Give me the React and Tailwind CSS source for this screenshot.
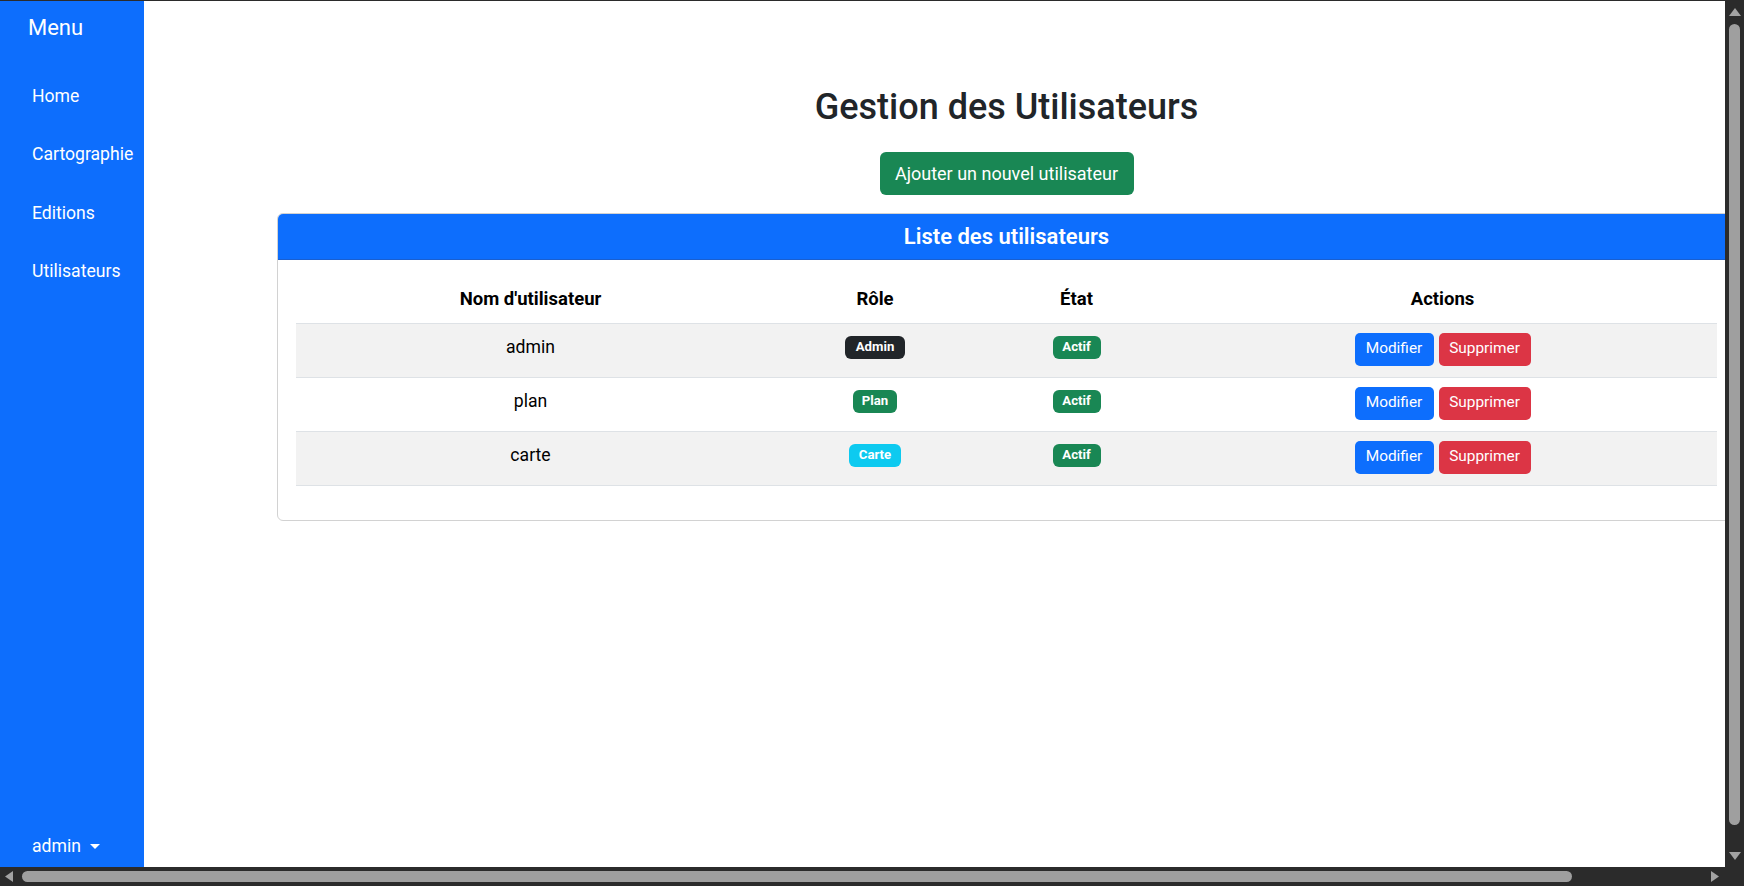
import React from "react";

const users = [
  { name: "admin", role: "Admin", roleCls: "bg-[#212529] w-[60px]" },
  { name: "plan", role: "Plan", roleCls: "bg-[#198754] w-[44px]" },
  { name: "carte", role: "Carte", roleCls: "bg-[#0dcaf0] w-[52px]" },
];

function Tri({ dir }) {
  const paths = {
    up: "M0 8 L6 0 L12 8 Z",
    down: "M0 0 L12 0 L6 8 Z",
    left: "M8 0 L8 11 L0 5.5 Z",
    right: "M0 0 L8 5.5 L0 11 Z",
  };
  const vert = dir === "up" || dir === "down";
  return (
    <svg width={vert ? 12 : 8} height={vert ? 8 : 11} viewBox={vert ? "0 0 12 8" : "0 0 8 11"} className="shrink-0">
      <path d={paths[dir]} fill="#a3a3a3" />
    </svg>
  );
}

export default function App() {
  return (
    <div className="w-[1744px] h-[886px] bg-[#2b2b2b] flex flex-col overflow-hidden font-['Roboto',sans-serif]">
      <div className="flex h-[867px]">
        {/* viewport */}
        <div className="w-[1725px] h-full overflow-hidden border-t border-[#2b2b2b] bg-white">
          <div className="flex h-full w-[1869px]">
            {/* sidebar */}
            <aside className="w-[144px] shrink-0 h-full bg-[#0d6efd] text-white flex flex-col">
              <div className="pl-[28px] pt-[14px] h-[26px] leading-[26px] text-[22px] box-content">Menu</div>
              <nav className="mt-[26px] flex flex-col">
                {["Home", "Cartographie", "Editions", "Utilisateurs"].map((t) => (
                  <div key={t} className="h-[58.3px] flex items-center pl-[32px] text-[17.6px]">
                    {t}
                  </div>
                ))}
              </nav>
              <div className="mt-auto mb-[8px] pl-[32px] h-[26px] flex items-center text-[17.6px]">
                <span>admin</span>
                <span className="ml-[9px] mt-[1px] w-0 h-0 border-x-[5px] border-x-transparent border-t-[5px] border-t-white"></span>
              </div>
            </aside>

            {/* main */}
            <main className="w-[1725px] shrink-0 px-[133px] pt-[85px] flex flex-col items-center text-[#212529]">
              <h2 className="h-[42px] leading-[42px] text-[36px] font-medium">Gestion des Utilisateurs</h2>
              <button className="mt-[24px] w-[254px] h-[43px] rounded-[6px] bg-[#198754] text-white text-[18px] flex items-center justify-center">
                Ajouter un nouvel utilisateur
              </button>

              <div className="mt-[18px] w-full border border-[#d2d2d2] rounded-[6px] overflow-hidden bg-white">
                <div className="h-[46px] bg-[#0d6efd] border-b border-[#1a5fcf] flex items-center justify-center text-white text-[22px] font-semibold">
                  Liste des utilisateurs
                </div>
                <div className="px-[18px] pt-[18px] pb-[34px]">
                  <table className="w-full table-fixed border-collapse text-black text-[17.6px]">
                    <colgroup>
                      <col className="w-[469px]" />
                      <col className="w-[220px]" />
                      <col className="w-[183px]" />
                      <col />
                    </colgroup>
                    <thead>
                      <tr className="h-[45px] border-b border-[#dee2e6]">
                        <th className="font-bold text-center p-0 text-[18.5px]">Nom d'utilisateur</th>
                        <th className="font-bold text-center p-0 text-[18.5px]">Rôle</th>
                        <th className="font-bold text-center p-0 text-[18.5px]">État</th>
                        <th className="font-bold text-center p-0 text-[18.5px]">Actions</th>
                      </tr>
                    </thead>
                    <tbody>
                      {users.map((u, i) => (
                        <tr key={u.name} className={`border-b border-[#dee2e6] ${i % 2 === 0 ? "bg-[#f2f2f2]" : "bg-white"}`}>
                          <td className="p-0 h-[54px] align-top">
                            <div className="h-[47px] flex items-center justify-center">{u.name}</div>
                          </td>
                          <td className="p-0 h-[54px] align-top">
                            <div className="h-[47px] flex items-center justify-center">
                              <span className={`${u.roleCls} h-[23px] rounded-[6px] text-white text-[13.2px] font-bold flex items-center justify-center`}>
                                {u.role}
                              </span>
                            </div>
                          </td>
                          <td className="p-0 h-[54px] align-top">
                            <div className="h-[47px] flex items-center justify-center">
                              <span className="bg-[#198754] w-[48px] h-[23px] rounded-[6px] text-white text-[13.2px] font-bold flex items-center justify-center">
                                Actif
                              </span>
                            </div>
                          </td>
                          <td className="p-0 h-[54px] align-top">
                            <div className="pt-[9px] flex items-start justify-center gap-[5px]">
                              <button className="w-[79px] h-[33px] rounded-[5px] bg-[#0d6efd] text-white text-[15.4px] flex items-center justify-center">
                                Modifier
                              </button>
                              <button className="w-[92px] h-[33px] rounded-[5px] bg-[#dc3545] text-white text-[15.4px] flex items-center justify-center">
                                Supprimer
                              </button>
                            </div>
                          </td>
                        </tr>
                      ))}
                    </tbody>
                  </table>
                </div>
              </div>
            </main>
          </div>
        </div>

        {/* vertical scrollbar */}
        <div className="w-[19px] h-full bg-[#2b2b2b] flex flex-col items-center">
          <div className="mt-[8px]"><Tri dir="up" /></div>
          <div className="mt-[8px] w-[11px] h-[801px] rounded-[6px] bg-[#9f9f9f]"></div>
          <div className="mt-[27px]"><Tri dir="down" /></div>
        </div>
      </div>

      {/* horizontal scrollbar */}
      <div className="flex h-[19px]">
        <div className="w-[1725px] h-full flex items-center pl-[5px] pr-[6px]">
          <Tri dir="left" />
          <div className="ml-[9px] w-[1550px] h-[11px] rounded-[6px] bg-[#9f9f9f]"></div>
          <div className="flex-1"></div>
          <Tri dir="right" />
        </div>
        <div className="w-[19px] h-full bg-[#2b2b2b]"></div>
      </div>
    </div>
  );
}
